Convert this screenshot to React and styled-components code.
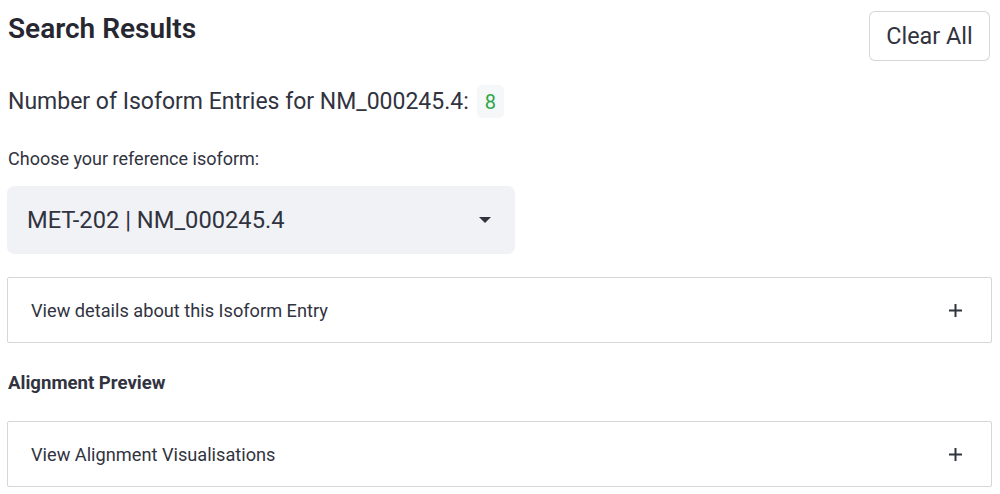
import React from "react";
import styled, { createGlobalStyle } from "styled-components";

const Global = createGlobalStyle`
  html, body { margin: 0; padding: 0; background: #ffffff; }
  body { font-family: Roboto, "Liberation Sans", sans-serif; color: #31333f; }
`;

const Page = styled.div`
  width: 985px;
  padding: 11px 0 0 7px;
  display: flex;
  flex-direction: column;
`;

const HeaderRow = styled.div`
  display: flex;
  justify-content: space-between;
  align-items: flex-start;
`;

const Title = styled.h3`
  margin: 0;
  padding-left: 1px;
  font-size: 28px;
  line-height: 36px;
  font-weight: 600;
  color: #262730;
`;

const Button = styled.button`
  height: 50px;
  width: 121px;
  margin-right: 2px;
  border: 1px solid rgba(49, 51, 63, 0.2);
  border-radius: 6px;
  background: #fff;
  font-family: inherit;
  font-size: 23.4px;
  color: #31333f;
  padding: 0;
  cursor: pointer;
`;

const CountRow = styled.div`
  margin-top: 24px;
  display: flex;
  align-items: center;
  gap: 8px;
  padding-left: 1px;
  font-size: 23px;
  height: 33px;
`;

const Badge = styled.span`
  display: inline-flex;
  align-items: center;
  justify-content: center;
  height: 33px;
  padding: 0 8px;
  border-radius: 5px;
  background: #f6f7f9;
  color: #2aa745;
  font-size: 20px;
`;

const Label = styled.div`
  margin-top: 31px;
  padding-left: 1px;
  font-size: 18px;
  line-height: 20px;
  color: #31333f;
`;

const Select = styled.div`
  margin-top: 17px;
  width: 508px;
  height: 68px;
  box-sizing: border-box;
  background: #f0f2f6;
  border-radius: 7px;
  display: flex;
  align-items: center;
  justify-content: space-between;
  padding: 0 24px 0 20px;
  font-size: 23.7px;
  color: #31333f;
`;

const Expander = styled.div`
  margin-top: ${(p) => p.$mt}px;
  height: 66px;
  box-sizing: border-box;
  border: 1px solid rgba(49, 51, 63, 0.2);
  border-radius: 2px;
  display: flex;
  align-items: center;
  justify-content: space-between;
  padding: 0 29px 0 23px;
  font-size: 18.2px;
  color: #31333f;
`;

const SectionTitle = styled.div`
  margin-top: 30px;
  padding-left: 1px;
  font-size: 18.6px;
  line-height: 20px;
  font-weight: 700;
  color: #31333f;
`;

const Caret = () => (
  <svg width="12" height="6" viewBox="0 0 12 6">
    <path d="M0 0 L12 0 L6 6 Z" fill="#31333f" />
  </svg>
);

const Plus = () => (
  <svg width="13" height="13" viewBox="0 0 13 13">
    <path d="M6.5 0 V13 M0 6.5 H13" stroke="#31333f" strokeWidth="2" />
  </svg>
);

export default function App() {
  return (
    <>
      <Global />
      <Page>
        <HeaderRow>
          <Title>Search Results</Title>
          <Button>Clear All</Button>
        </HeaderRow>
        <CountRow>
          Number of Isoform Entries for NM_000245.4:
          <Badge>8</Badge>
        </CountRow>
        <Label>Choose your reference isoform:</Label>
        <Select>
          <span>MET-202 | NM_000245.4</span>
          <Caret />
        </Select>
        <Expander $mt={23}>
          <span>View details about this Isoform Entry</span>
          <Plus />
        </Expander>
        <SectionTitle>Alignment Preview</SectionTitle>
        <Expander $mt={28}>
          <span>View Alignment Visualisations</span>
          <Plus />
        </Expander>
      </Page>
    </>
  );
}
